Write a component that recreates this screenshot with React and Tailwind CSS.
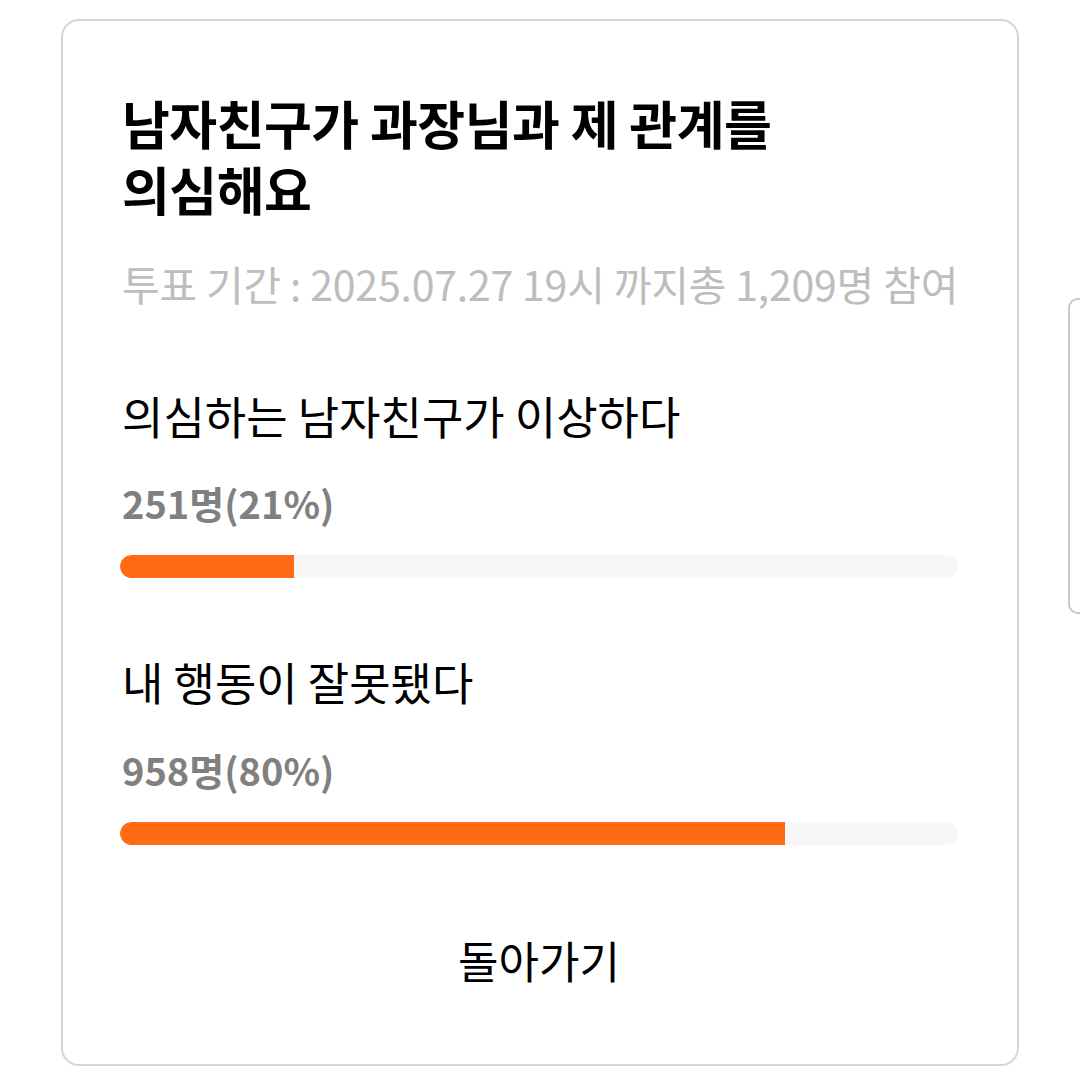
import React from "react";

function Bar({ pct }) {
  return (
    <div className="w-full h-[23px] rounded-full bg-[#f7f7f7] overflow-hidden">
      <div className="h-full bg-[#ff6a13] rounded-l-full" style={{ width: pct + "%" }} />
    </div>
  );
}

export default function App() {
  return (
    <div className="relative w-[1080px] h-[1089px] bg-white overflow-hidden font-['Noto_Sans_CJK_KR',sans-serif]">
      <div className="absolute left-[1068px] top-[298px] w-[40px] h-[316px] border-2 border-[#c8c8c8] rounded-[10px]" />
      <div className="pt-[19px] pl-[61px]">
        <div className="w-[958px] h-[1047px] border-2 border-[#d6d6d6] rounded-[18px] pl-[57px] pr-[59px] pt-[69px] flex flex-col">
          <h1 className="pl-[2px] text-[52px] leading-[66px] font-bold text-black tracking-[-0.5px]">
            <span className="block">남자친구가 과장님과 제 관계를</span>
            <span className="block">의심해요</span>
          </h1>
          <p className="pl-[2px] mt-[37px] text-[41px] leading-[48px] text-[#bdbdbd] tracking-[-0.2px] whitespace-nowrap">
            투표 기간 : 2025.07.27 19시 까지총 1,209명 참여
          </p>
          <p className="pl-[2px] mt-[83px] text-[45px] leading-[52px] text-black">의심하는 남자친구가 이상하다</p>
          <p className="pl-[2px] mt-[39px] text-[38px] leading-[44px] font-semibold text-[#808080]">251명(21%)</p>
          <div className="mt-[30px]">
            <Bar pct={20.8} />
          </div>
          <p className="pl-[2px] mt-[78px] text-[45px] leading-[52px] text-black">내 행동이 잘못됐다</p>
          <p className="pl-[2px] mt-[40px] text-[38px] leading-[44px] font-semibold text-[#808080]">958명(80%)</p>
          <div className="mt-[30px]">
            <Bar pct={79.4} />
          </div>
          <div className="mt-[89px] text-center text-[44px] leading-[52px] text-black">돌아가기</div>
        </div>
      </div>
    </div>
  );
}
